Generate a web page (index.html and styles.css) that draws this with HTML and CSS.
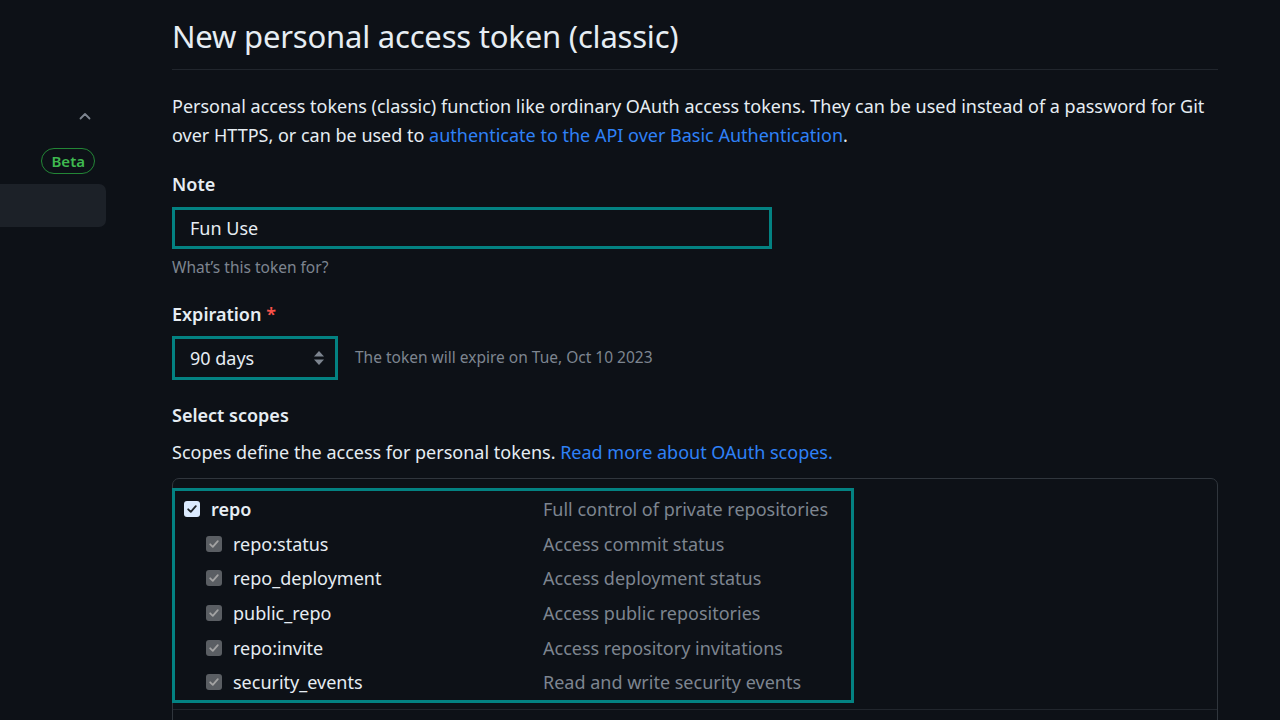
FILE: index.html
```html
<!DOCTYPE html>
<html lang="en">
<head>
<meta charset="utf-8">
<title>New personal access token (classic)</title>
<link rel="stylesheet" href="styles.css">
</head>
<body>
<div class="layout">
  <aside class="sidebar">
    <div class="side-chevron">
      <svg width="16" height="16" viewBox="0 0 16 16"><path d="M3.5 10.5 L8 6 L12.5 10.5" fill="none" stroke="#7d8590" stroke-width="1.8" stroke-linecap="round" stroke-linejoin="round"/></svg>
    </div>
    <div class="side-beta"><span class="beta">Beta</span></div>
    <div class="side-item"></div>
  </aside>
  <main class="main">
    <h1 class="title">New personal access token (classic)</h1>
    <p class="intro">Personal access tokens (classic) function like ordinary OAuth access tokens. They can be used instead of a password for Git over HTTPS, or can be used to <a class="link" href="#">authenticate to the API over Basic Authentication</a>.</p>

    <div class="field">
      <label class="label">Note</label>
      <div class="input hl">Fun Use</div>
      <div class="hint">What’s this token for?</div>
    </div>

    <div class="field exp-field">
      <label class="label">Expiration <span class="req">*</span></label>
      <div class="exp-row">
        <div class="select hl">
          <span>90 days</span>
          <svg class="updown" width="12" height="18" viewBox="0 0 12 18"><path d="M6 2 L11 7.5 H1 Z" fill="#7d8590"/><path d="M6 16 L11 10.5 H1 Z" fill="#7d8590"/></svg>
        </div>
        <span class="exp-note">The token will expire on Tue, Oct 10 2023</span>
      </div>
    </div>

    <div class="field scopes-field">
      <label class="label">Select scopes</label>
      <p class="scopes-desc">Scopes define the access for personal tokens. <a class="link" href="#">Read more about OAuth scopes.</a></p>
      <div class="scope-box">
        <div class="scope-group hl">
          <div class="scope-row top">
            <span class="check on"><svg width="12" height="12" viewBox="0 0 12 12"><path d="M2.2 6.3 L4.8 8.8 L9.8 3.2" fill="none" stroke="#1f2328" stroke-width="1.8" stroke-linecap="round" stroke-linejoin="round"/></svg></span>
            <span class="scope-name main-scope">repo</span>
            <span class="scope-desc">Full control of private repositories</span>
          </div>
          <div class="scope-row sub">
            <span class="check off"><svg width="12" height="12" viewBox="0 0 12 12"><path d="M2.2 6.3 L4.8 8.8 L9.8 3.2" fill="none" stroke="#a3a3a3" stroke-width="1.8" stroke-linecap="round" stroke-linejoin="round"/></svg></span>
            <span class="scope-name">repo:status</span>
            <span class="scope-desc">Access commit status</span>
          </div>
          <div class="scope-row sub">
            <span class="check off"><svg width="12" height="12" viewBox="0 0 12 12"><path d="M2.2 6.3 L4.8 8.8 L9.8 3.2" fill="none" stroke="#a3a3a3" stroke-width="1.8" stroke-linecap="round" stroke-linejoin="round"/></svg></span>
            <span class="scope-name">repo_deployment</span>
            <span class="scope-desc">Access deployment status</span>
          </div>
          <div class="scope-row sub">
            <span class="check off"><svg width="12" height="12" viewBox="0 0 12 12"><path d="M2.2 6.3 L4.8 8.8 L9.8 3.2" fill="none" stroke="#a3a3a3" stroke-width="1.8" stroke-linecap="round" stroke-linejoin="round"/></svg></span>
            <span class="scope-name">public_repo</span>
            <span class="scope-desc">Access public repositories</span>
          </div>
          <div class="scope-row sub">
            <span class="check off"><svg width="12" height="12" viewBox="0 0 12 12"><path d="M2.2 6.3 L4.8 8.8 L9.8 3.2" fill="none" stroke="#a3a3a3" stroke-width="1.8" stroke-linecap="round" stroke-linejoin="round"/></svg></span>
            <span class="scope-name">repo:invite</span>
            <span class="scope-desc">Access repository invitations</span>
          </div>
          <div class="scope-row sub">
            <span class="check off"><svg width="12" height="12" viewBox="0 0 12 12"><path d="M2.2 6.3 L4.8 8.8 L9.8 3.2" fill="none" stroke="#a3a3a3" stroke-width="1.8" stroke-linecap="round" stroke-linejoin="round"/></svg></span>
            <span class="scope-name">security_events</span>
            <span class="scope-desc">Read and write security events</span>
          </div>
        </div>
        <div class="scope-next"></div>
      </div>
    </div>
  </main>
</div>
</body>
</html>
```

FILE: styles.css
```css
* { box-sizing: border-box; }
html, body { margin: 0; padding: 0; }
body {
  background: #0d1117;
  color: #e6edf3;
  font-family: "Noto Sans", "Open Sans", sans-serif;
  font-size: 18px;
  height: 720px;
  overflow: hidden;
}
.layout {
  display: flex;
  gap: 66px;
}
.sidebar {
  width: 106px;
  flex: none;
  padding-top: 108px;
}
.side-chevron {
  display: flex;
  justify-content: flex-end;
  padding-right: 13px;
  height: 22px;
}
.side-beta {
  display: flex;
  justify-content: flex-end;
  padding-right: 11px;
  margin-top: 18px;
}
.beta {
  display: inline-flex;
  align-items: center;
  height: 26px;
  padding: 0 9px;
  border: 1px solid #238636;
  border-radius: 13px;
  color: #3fb950;
  font-size: 15px;
  font-weight: 600;
}
.side-item {
  margin-top: 10px;
  height: 43px;
  background: #1c2128;
  border-radius: 0 7px 7px 0;
}
.main {
  width: 1046px;
  flex: none;
}
.title {
  margin: 0;
  padding-top: 15px;
  padding-bottom: 12px;
  font-size: 31px;
  letter-spacing: -0.2px;
  font-weight: 400;
  line-height: 42px;
  border-bottom: 1px solid #21262d;
}
.intro {
  margin: 22px 0 0;
  line-height: 29px;
}
.link { color: #2f81f7; text-decoration: none; }
.field { margin-top: 20px; }
.exp-field { margin-top: 21px; }
.label {
  display: block;
  font-weight: 600;
  line-height: 28px;
}
.req { color: #f85149; }
.hl { border: 3px solid #038282; }
.input {
  margin-top: 9px;
  width: 600px;
  height: 42px;
  padding: 0 15px;
  display: flex;
  align-items: center;
  background: #0d1117;
}
.hint {
  margin-top: 6px;
  color: #7d8590;
  font-size: 15.5px;
  line-height: 24px;
}
.exp-row {
  margin-top: 8px;
  display: flex;
  align-items: center;
  gap: 17px;
}
.select {
  width: 166px;
  height: 44px;
  padding: 0 10px 0 15px;
  display: flex;
  align-items: center;
  justify-content: space-between;
}
.exp-note {
  color: #7d8590;
  font-size: 15.5px;
  padding-bottom: 3px;
}
.scopes-field { margin-top: 21px; }
.scopes-desc {
  margin: 9px 0 0;
  line-height: 29px;
}
.scope-box {
  margin-top: 11px;
  border: 1px solid #30363d;
  border-radius: 7px;
  padding-top: 9px;
  height: 260px;
}
.scope-group {
  width: 682px;
  margin-left: -1px;
  padding: 1px 0 0;
}
.scope-row {
  display: flex;
  align-items: center;
  height: 34.6px;
}
.scope-row.top { padding-left: 9px; }
.scope-row.sub { padding-left: 31px; }
.check {
  width: 16px;
  height: 16px;
  border-radius: 3px;
  display: inline-flex;
  align-items: center;
  justify-content: center;
  flex: none;
}
.check.on { background: #dbeafe; }
.check.off { background: #5a5e63; }
.scope-name {
  margin-left: 11px;
  width: 332px;
  flex: none;
}
.scope-row.sub .scope-name { width: 310px; margin-left: 11px; }
.main-scope { font-weight: 600; }
.scope-desc { color: #7d8590; }
.scope-next {
  margin-top: 6px;
  border-top: 1px solid #21262d;
}
```
